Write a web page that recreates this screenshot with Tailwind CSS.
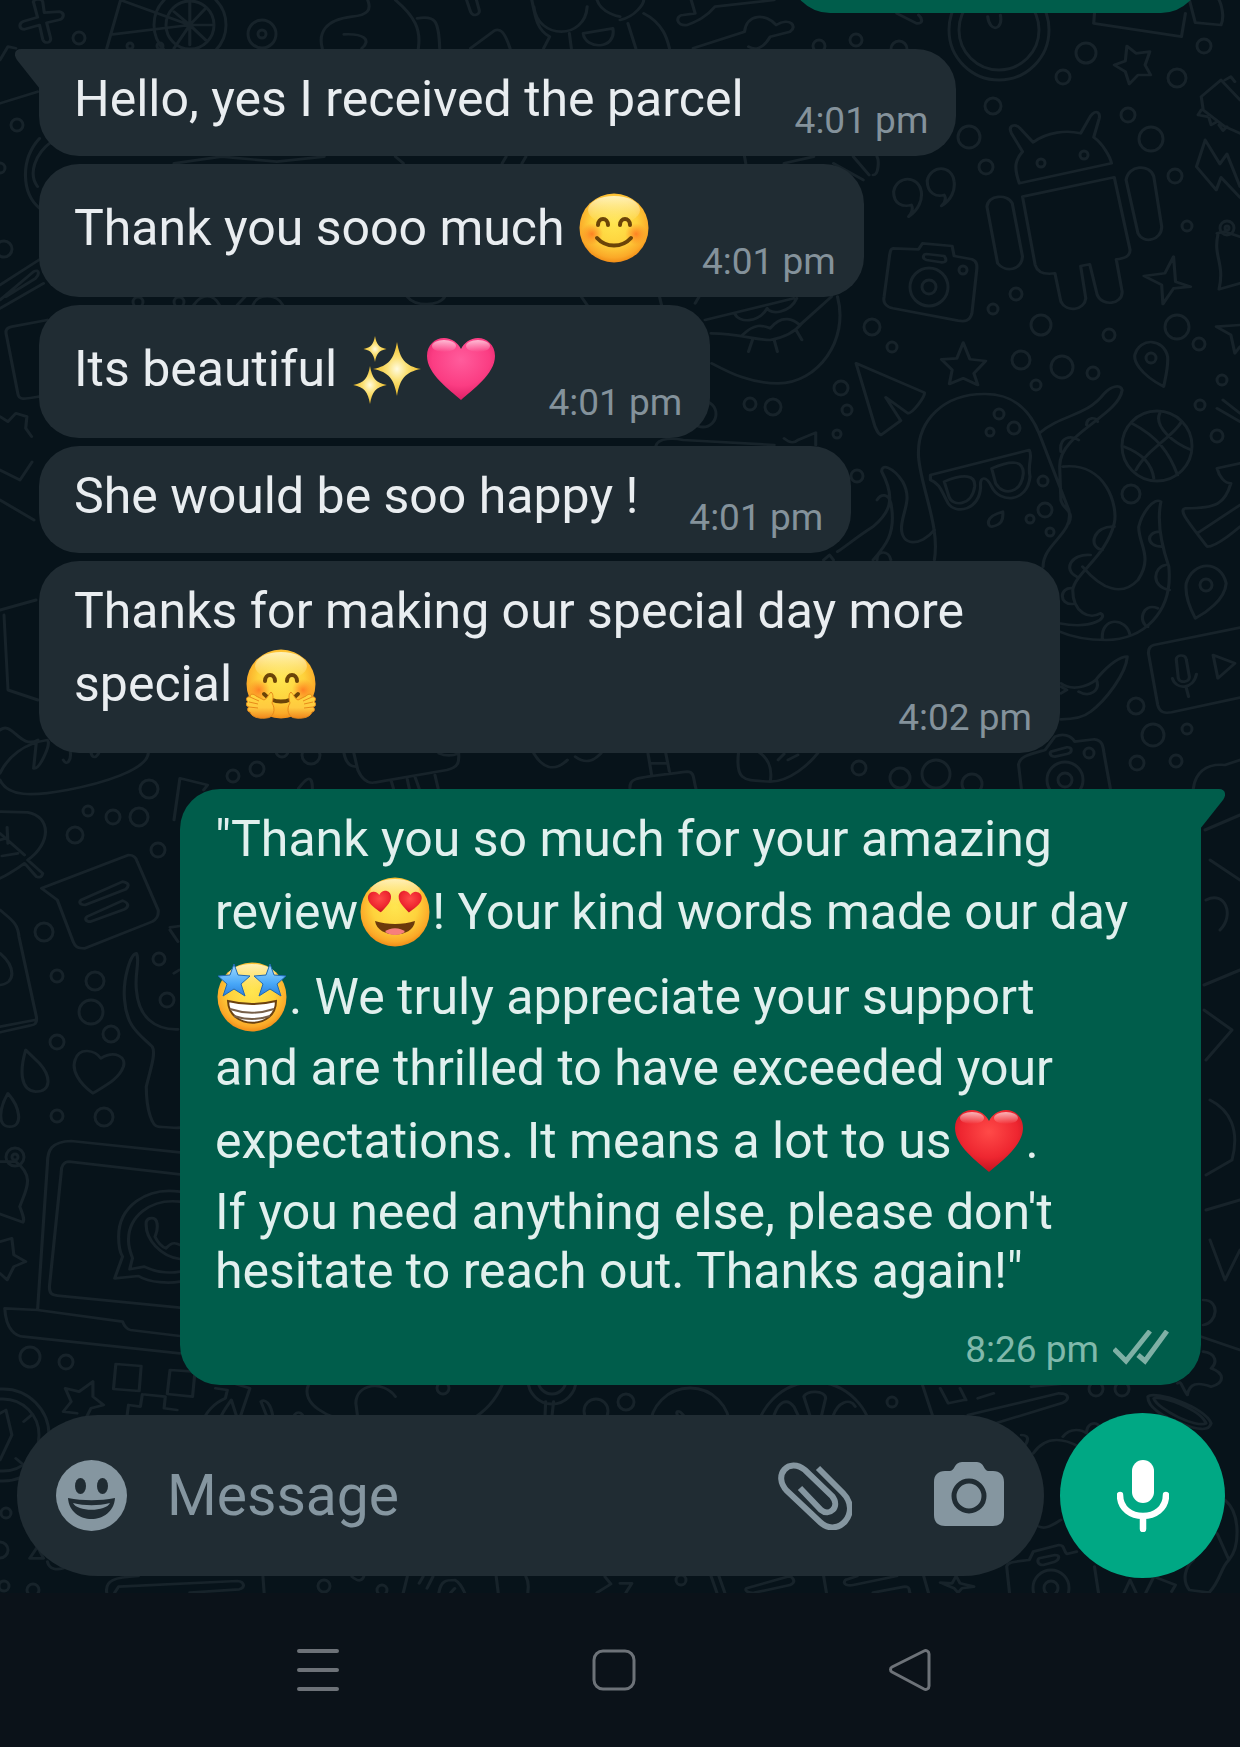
<!DOCTYPE html>
<html lang="en">
<head>
<meta charset="utf-8">
<meta name="viewport" content="width=device-width, initial-scale=1">
<title>Chat</title>
<script src="https://cdn.jsdelivr.net/npm/@tailwindcss/browser@4"></script>
</head>
<body class="min-h-screen bg-[#0b1219] font-['Roboto',sans-serif] text-[#e9edf0]">

<!-- shared emoji gradients and shapes -->
<svg class="absolute size-0" aria-hidden="true">
  <defs>
    <radialGradient id="face" cx=".5" cy=".42" r=".6">
      <stop offset="0" stop-color="#ffe650"/><stop offset=".55" stop-color="#fed23c"/><stop offset=".85" stop-color="#fba928"/><stop offset="1" stop-color="#ee8412"/>
    </radialGradient>
    <linearGradient id="shine" x2="0" y2="1"><stop offset="0" stop-color="#fff6c8" stop-opacity=".9"/><stop offset="1" stop-color="#fff0a0" stop-opacity="0"/></linearGradient>
    <radialGradient id="blush"><stop offset="0" stop-color="#ff6a1c" stop-opacity=".75"/><stop offset="1" stop-color="#ff7a1c" stop-opacity="0"/></radialGradient>
    <radialGradient id="pink" cx=".5" cy=".35" r=".7"><stop offset="0" stop-color="#ff5c9c"/><stop offset=".6" stop-color="#fb3d83"/><stop offset="1" stop-color="#d9185f"/></radialGradient>
    <radialGradient id="red" cx=".5" cy=".35" r=".7"><stop offset="0" stop-color="#ff4a48"/><stop offset=".6" stop-color="#ee2630"/><stop offset="1" stop-color="#b80f1c"/></radialGradient>
    <linearGradient id="gloss" x2="0" y2="1"><stop offset="0" stop-color="#fff" stop-opacity=".65"/><stop offset="1" stop-color="#fff" stop-opacity="0"/></linearGradient>
    <radialGradient id="spark"><stop offset="0" stop-color="#fffbe0"/><stop offset=".4" stop-color="#fbe27a"/><stop offset="1" stop-color="#eebb20"/></radialGradient>
    <linearGradient id="blue" x2="0" y2="1"><stop offset="0" stop-color="#a4dcff"/><stop offset=".6" stop-color="#4aa9f8"/><stop offset="1" stop-color="#2a7fe0"/></linearGradient>
    <linearGradient id="hand" x2="0" y2="1"><stop offset="0" stop-color="#ffd83f"/><stop offset=".6" stop-color="#ffca40"/><stop offset="1" stop-color="#f0861c"/></linearGradient>
    <path id="heart" d="M35 66C24 56 1 40 1 22C1 11 9 4 18 4C26 4 32 9 35 15C38 9 44 4 52 4C61 4 69 11 69 22C69 40 46 56 35 66Z"/>
    <path id="star" d="M16 0L20 11L32 12L23 20L27 32L16 25L5 32L9 20L0 12L12 11Z"/>
    <path id="twinkle" d="M0-27C3-10 8-3 24 0C8 3 3 10 0 27C-3 10-8 3-24 0C-8-3-3-10 0-27Z"/>
    <g id="smile">
      <circle cx="35" cy="35" r="34.500" fill="url(#face)"/>
      <ellipse cx="35" cy="17" rx="26" ry="14" fill="url(#shine)"/>
      <circle cx="13" cy="41" r="11" fill="url(#blush)"/><circle cx="57" cy="41" r="11" fill="url(#blush)"/>
      <g fill="none" stroke="#6b4408" stroke-width="4" stroke-linecap="round">
        <path d="M19 32C19 24 29 24 29 32M41 32C41 24 51 24 51 32"/>
        <path d="M18 45C27 55 43 55 52 45"/>
      </g>
    </g>
  </defs>
</svg>

<div class="relative overflow-hidden bg-[#07131a]">
  <!-- wallpaper doodles -->
  <svg class="absolute inset-0 h-full w-full" viewBox="0 0 1240 1593" preserveAspectRatio="xMidYMin slice" fill="none" stroke="#17232a" stroke-width="3" stroke-linejoin="round" stroke-linecap="round" aria-hidden="true">
    <circle cx="79" cy="38" r="6"/><circle cx="262" cy="34" r="14"/><circle cx="262" cy="34" r="4"/><circle cx="17" cy="125" r="6"/><circle cx="0" cy="168" r="5"/><circle cx="4" cy="249" r="8"/><circle cx="190" cy="25" r="24"/><circle cx="190" cy="25" r="36"/><circle cx="130" cy="46" r="3"/><circle cx="160" cy="46" r="3"/><circle cx="138" cy="302" r="5"/><circle cx="179" cy="302" r="5"/>
    <circle cx="819" cy="46" r="6"/><circle cx="856" cy="40" r="6"/><circle cx="899" cy="49" r="8"/><circle cx="1086" cy="53" r="10"/><circle cx="1204" cy="46" r="7"/><circle cx="1063" cy="77" r="7"/><circle cx="1177" cy="78" r="9"/><circle cx="993" cy="106" r="8"/><circle cx="1128" cy="115" r="7"/><circle cx="969" cy="137" r="11"/><circle cx="1151" cy="139" r="12"/><circle cx="986" cy="167" r="7"/><circle cx="1175" cy="176" r="7"/><circle cx="1187" cy="226" r="5"/><circle cx="1016" cy="294" r="6"/><circle cx="993" cy="309" r="5"/><circle cx="1041" cy="325" r="10"/><circle cx="872" cy="327" r="8"/><circle cx="1109" cy="335" r="6"/><circle cx="1177" cy="327" r="12"/><circle cx="892" cy="347" r="5"/><circle cx="1199" cy="344" r="6"/><circle cx="1021" cy="360" r="9"/><circle cx="1062" cy="367" r="11"/><circle cx="1093" cy="373" r="6"/><circle cx="1036" cy="385" r="5"/><circle cx="841" cy="388" r="7"/><circle cx="750" cy="404" r="6"/><circle cx="773" cy="407" r="8"/><circle cx="847" cy="410" r="5"/><circle cx="1222" cy="380" r="5"/><circle cx="1200" cy="405" r="5"/><circle cx="837" cy="434" r="4"/><circle cx="1217" cy="436" r="6"/><circle cx="703" cy="414" r="13"/>
    <circle cx="999" cy="30" r="50"/><circle cx="999" cy="30" r="40"/><circle cx="1041" cy="163" r="4"/><circle cx="1084" cy="155" r="4"/><circle cx="929" cy="287" r="19"/><circle cx="929" cy="287" r="7"/><circle cx="963" cy="270" r="4"/><circle cx="1151" cy="358" r="5"/><circle cx="1227" cy="228" r="7"/><circle cx="1227" cy="228" r="2"/>
    <circle cx="999" cy="414" r="5"/><circle cx="1014" cy="428" r="6"/><circle cx="990" cy="432" r="4"/><circle cx="1043" cy="481" r="5"/><circle cx="1045" cy="510" r="7"/><circle cx="1030" cy="519" r="4"/><circle cx="1050" cy="532" r="4"/><circle cx="1157" cy="446" r="35"/><circle cx="1131" cy="494" r="9"/><circle cx="857" cy="476" r="6"/><circle cx="1206" cy="585" r="6"/><circle cx="1136" cy="706" r="8"/><circle cx="1153" cy="735" r="11"/><circle cx="1187" cy="729" r="5"/><circle cx="1137" cy="763" r="7"/><circle cx="1176" cy="761" r="6"/><circle cx="859" cy="768" r="7"/><circle cx="900" cy="778" r="10"/><circle cx="936" cy="774" r="14"/><circle cx="972" cy="784" r="10"/><circle cx="1065" cy="780" r="18"/><circle cx="1065" cy="780" r="7"/><circle cx="1089" cy="753" r="5"/>
    <circle cx="282" cy="751" r="6"/><circle cx="311" cy="755" r="9"/><circle cx="233" cy="776" r="6"/><circle cx="257" cy="769" r="7"/><circle cx="149" cy="789" r="9"/><circle cx="88" cy="811" r="5"/><circle cx="113" cy="817" r="7"/><circle cx="139" cy="817" r="9"/><circle cx="75" cy="835" r="8"/><circle cx="158" cy="850" r="7"/><circle cx="44" cy="932" r="9"/><circle cx="159" cy="959" r="6"/><circle cx="57" cy="976" r="6"/><circle cx="95" cy="981" r="9"/><circle cx="91" cy="1012" r="12"/><circle cx="167" cy="1000" r="7"/><circle cx="111" cy="1034" r="8"/><circle cx="57" cy="1042" r="7"/><circle cx="57" cy="1116" r="6"/><circle cx="104" cy="1117" r="9"/><circle cx="15" cy="1157" r="9"/><circle cx="15" cy="1157" r="3"/><circle cx="30" cy="1357" r="10"/><circle cx="66" cy="1362" r="7"/><circle cx="443" cy="1388" r="6"/><circle cx="596" cy="1411" r="12"/><circle cx="6" cy="1513" r="5"/><circle cx="0" cy="1550" r="8"/><circle cx="4" cy="1586" r="5"/><circle cx="33" cy="1590" r="6"/><circle cx="324" cy="1586" r="6"/><circle cx="382" cy="1590" r="5"/><circle cx="626" cy="1402" r="8"/><circle cx="892" cy="1402" r="5"/><circle cx="1096" cy="1389" r="7"/><circle cx="1122" cy="1389" r="7"/><circle cx="681" cy="1580" r="5"/><circle cx="1051" cy="1588" r="18"/><circle cx="1051" cy="1588" r="7"/>
    <circle cx="3" cy="1435" r="46"/><circle cx="3" cy="1435" r="36"/><circle cx="552" cy="1380" r="24"/><circle cx="552" cy="1380" r="14"/><circle cx="690" cy="1428" r="40"/><circle cx="814" cy="1440" r="58"/>
    <g transform="scale(.3954 .3333)" stroke-width="8">
      <path d="M85 8C80 0 105-8 108 5L112 38L150 35C165 38 162 58 148 60L118 68L128 115C130 130 112 132 108 118L100 75L62 88C48 88 46 70 60 64L95 52ZM305 0L270 145M305 0L480 75L285 103M480 75L440 145M480 75L480 0M480 75L540 75M480 75L520 120M480 75L480 135M480 75L520 25M480 75L440 35M930 0C940 30 930 45 890 50C820 60 805 100 815 145M870 103C920 100 940 120 915 145M1000 0C1050 50 1065 90 1058 145M1055 55C1100 45 1110 60 1112 145M1180 0L1190 35C1195 52 1215 45 1212 30L1205 0M1190 145L1250 92C1265 85 1275 92 1290 145M1350 20C1360 120 1480 120 1485 20M1345 0C1355 60 1360 90 1390 110L1375 145M1440 100L1445 145M1475 100L1550 85C1560 150 1480 150 1475 100M1510 0C1520 40 1568 50 1568 50M0 180L20 140L40 145M0 310L95 275M100 415C50 480 55 580 100 625M130 425C90 460 70 520 95 560M0 855L105 775M0 900L85 815C100 805 100 825 90 835L15 890M0 925L110 850M120 960L30 980C10 985 15 1000 17 1010L45 1180C48 1205 70 1195 98 1190M0 1250L20 1265L40 1240L68 1250L65 1285L80 1310M440 490L560 470L700 485L820 470M1000 470L1020 490M1270 490L1280 470M1320 490L1330 470M490 915C510 880 540 880 555 915M600 915L620 890M640 915C650 880 700 880 715 915M1030 890C1050 920 1110 920 1125 890M1470 890L1485 915"/>
    </g>
    <g transform="translate(620 0) scale(.3954 .3333)" stroke-width="8">
      <path d="M0 60C40 50 60 10 60 0M60 40C110 70 120 120 125 145M20 70L40 145M240 20L390 0M240 20C215 55 190 65 170 75C140 80 140 45 160 45L190 40L180 0M185 145L315 95C320 40 370 40 395 75C430 50 450 80 430 95L380 110C360 150 340 150 325 140M700 40L750 70C768 72 765 55 755 45M930 50C935 100 970 90 962 45M1200 40L1198 70L1420 110L1430 40M1440 0L1455 68L1520 75C1530 50 1520 10 1515 0"/>
      <path d="M1282 138L1305 160L1340 155L1328 195L1342 225L1310 225L1288 252L1278 215L1250 195L1278 183ZM1470 290L1520 240L1568 300M1470 290L1475 330L1530 380L1568 400M1530 240L1545 230L1555 245M1470 330L1462 345L1485 350M1490 355L1495 375L1510 365M1515 375L1525 392L1535 380M1480 420L1458 500L1508 570L1520 532L1568 592M1480 420L1517 492L1535 462L1568 560"/>
      <path d="M1010 550C995 500 1000 480 1018 455L990 400C980 375 1000 370 1012 385L1045 427C1080 395 1130 390 1165 400L1190 348C1205 325 1215 340 1212 355L1198 412C1220 430 1240 470 1243 490ZM1018 590L1250 532L1290 750C1290 770 1275 775 1255 778L1270 875C1270 915 1220 920 1207 885L1188 793L1165 798L1178 895C1175 930 1130 940 1115 905L1100 820C1070 825 1055 815 1050 795ZM928 620C930 585 980 580 992 610L1018 770C1015 810 975 820 955 790ZM1280 540C1285 495 1340 490 1350 530L1370 680C1370 720 1325 735 1310 700Z"/>
      <path d="M730 650C755 630 765 600 762 575C755 525 700 525 692 575C692 612 715 622 737 615C742 625 738 640 730 650ZM813 618C838 600 848 570 845 545C840 492 785 495 777 542C777 580 800 592 820 585C825 595 822 608 813 618ZM690 745L755 748L765 730L840 738L845 768L890 778C905 785 903 800 902 812L890 940C885 965 870 965 855 962L690 925C670 920 665 905 668 890L682 765C684 750 685 748 690 745ZM775 762L820 768C830 785 820 788 812 787L775 780C762 775 768 762 775 762ZM1400 770L1405 845L1443 860L1400 865L1373 912L1370 855L1325 828L1378 820ZM1568 975L1508 980L1545 1005L1555 1060L1568 1040M1510 700L1530 695L1568 710M1512 705C1500 770 1530 790 1515 868L1568 850M868 1028L885 1078L925 1083L895 1120L905 1155L868 1135L833 1152L840 1110L813 1078L852 1075ZM597 1090L770 1178C772 1190 740 1240 728 1240L672 1192L710 1262L660 1305C650 1300 650 1290 645 1280ZM1375 1160C1310 1120 1300 1080 1302 1065C1315 1010 1375 1015 1385 1070C1387 1100 1380 1130 1375 1160ZM200 890L190 910M100 890L105 915M215 960L440 895M290 940C300 970 350 970 372 925C380 945 430 940 447 895M310 1005C340 970 360 975 380 985C410 940 440 960 455 975L535 890M230 1000C300 1000 340 1020 380 1020C430 1010 450 985 460 970M335 1020L325 1055M390 1020L398 1055M445 990L460 1020M550 890C580 1020 500 1150 400 1150C330 1150 280 1120 232 1090M415 490L490 470M540 490L615 540M590 470L630 525M640 525C655 525 655 480 650 470M315 470L318 490"/>
    </g>
    <g transform="translate(620 400) scale(.3954 .3333)" stroke-width="8">
      <path d="M755 170C750 60 820-20 925-18C1000-18 1040 40 1060 100L1135 330C1150 400 1070 430 1070 500M755 170C760 260 810 380 795 480M1060 100C1120 40 1180 50 1225-20C1240-40 1265-50 1270-30C1260 50 1110 100 1112 200L1115 300C1120 330 1150 330 1135 370M1120 200C1230 185 1260 320 1250 370C1230 470 1150 520 1145 570C1145 640 1190 660 1215 640C1235 650 1200 690 1110 670M1170 500C1220 570 1270 590 1310 540C1350 470 1310 430 1312 380C1320 340 1350 290 1368 305C1360 350 1365 420 1388 500C1400 640 1320 720 1230 720C1180 720 1140 710 1112 695M1250 380C1200 375 1180 440 1220 450M1190 465C1140 460 1120 510 1155 530M1145 565C1110 560 1110 615 1145 612M1365 395C1330 395 1330 440 1370 440M1380 495C1350 500 1340 560 1390 570M1360 625C1320 605 1310 670 1335 680M1220 718C1215 650 1280 650 1290 705M1115 155C1110 110 1140 105 1160 120M1180 75C1180 50 1205 50 1208 65"/>
      <path d="M785 225L1035 150C1045 170 1030 190 1037 230C1030 310 960 310 940 260C925 225 910 230 912 260C910 330 850 345 830 310C815 280 810 250 785 240ZM820 245C870 220 900 225 897 260C890 320 840 320 832 290ZM940 205C990 180 1020 180 1020 220C1015 280 970 290 950 250ZM968 335C920 350 930 380 940 380C965 375 970 360 968 335ZM1295 70C1360 110 1390 160 1410 225M1275 140C1320 160 1345 190 1350 235M1305 210C1330 150 1400 110 1420 65M1365 40C1350 80 1400 130 1445 150M795 390C760 440 710 440 712 380C715 330 740 300 715 245C690 200 660 190 662 215C700 300 680 340 640 380C600 410 570 440 550 455M650 300C660 280 680 280 685 310C700 400 670 440 640 480M515 480L530 465L540 480M650 480C650 450 680 450 685 480M415 115C430 130 440 130 450 120L495 98L495 135M90 140C95 110 140 115 160 120L390 135M1568 190L1510 205C1515 230 1530 250 1545 250M1545 250C1530 310 1510 325 1430 325C1410 330 1440 370 1485 440C1510 440 1568 380 1568 380M1460 400L1568 315M1510 25L1568 65M1525 0L1568 40M1455 655C1430 600 1430 570 1432 550C1450 480 1520 480 1533 550C1530 600 1480 640 1455 655ZM1568 683L1350 735C1335 740 1335 755 1338 770L1360 915C1365 940 1380 940 1395 937L1568 893M1407 780C1405 765 1430 760 1432 778L1440 830C1440 848 1415 850 1412 835ZM1397 835C1405 870 1450 870 1458 822M1432 863L1438 890M1500 765L1555 790L1512 835ZM1115 850C1150 880 1200 850 1210 830C1240 790 1265 770 1283 770C1280 820 1230 900 1190 935C1170 955 1140 958 1115 958M1115 860L1130 870L1115 880M1160 875C1190 895 1215 870 1205 840M1015 1165L1008 1095C1010 1070 1030 1065 1075 1050L1100 1010C1120 1000 1140 1005 1150 1025L1200 1018C1220 1020 1222 1040 1224 1060L1240 1165M1090 1055L1130 1042C1145 1040 1145 1058 1130 1062L1100 1070C1088 1070 1086 1060 1090 1055ZM1450 1165C1455 1120 1480 1090 1530 1095L1568 1080M70 1055L80 1125M115 1055L125 1115M80 1090L115 1090M25 1165C25 1130 40 1135 170 1115C190 1115 185 1140 192 1165M300 1055C290 1150 320 1140 380 1145C430 1145 480 1090 500 1060M350 1055C380 1080 385 1110 380 1145M400 1080L415 1062M425 1080L450 1065"/>
    </g>
    <g transform="translate(0 740) scale(.3954 .3333)" stroke-width="8">
      <path d="M0 100C20 50 60 10 120 0M0 120C20 170 80 170 170 150C260 130 370 90 375 40M85 85C100 90 125 20 122 5M85 85L92 5M160 60C170 80 180 60 178 38M230 38C235 60 245 50 250 38M870 40C875 70 885 80 900 80M895 40L905 90C920 130 940 130 950 127L1130 90C1165 80 1160 60 1160 40M990 125L995 145M1030 118L1035 145M1050 112L1060 145M1100 105L1108 145M1350 40C1370 80 1400 100 1435 60M1455 50C1490 80 1510 50 1520 40M1110 40C1130 50 1150 45 1160 40M755 145C765 130 790 90 790 145M440 240L455 115L525 135L515 150M0 215L70 217C130 230 130 310 70 360L108 400C105 415 98 412 92 410L62 370C40 390 10 410 0 415M0 280L62 345M18 262L20 310M5 348L45 340M15 295L0 300M105 445L325 345C340 345 345 355 347 365L400 510C402 530 395 538 385 545L215 625C195 625 190 620 185 605L145 480ZM205 480L310 425C330 430 325 440 318 448L215 495C200 495 200 485 205 480ZM220 530L310 482C328 490 325 500 315 508L228 545C215 545 215 535 220 530ZM0 510C30 540 45 550 48 590L92 830C95 855 85 855 75 857L0 877M0 860L88 840M0 640C40 680 40 730 0 735M345 640C330 640 310 720 315 780C320 860 350 880 385 920C395 940 380 990 370 1040C370 1110 385 1160 400 1160C420 1162 440 1165 455 1163M345 640C355 660 340 700 345 750C350 830 390 870 450 868M430 562L455 558M430 570L450 605M440 700L453 690"/>
    </g>
    <g transform="translate(0 1060) scale(.3954 .3333)" stroke-width="8">
      <path d="M65-30C50 30 50 90 90 95C130 95 130 50 100 10ZM235 100C200 70 180 30 190 0C200-40 240-30 255-5C290-30 320-10 312 20C300 60 260 80 235 100ZM20 100C0 140-10 200 25 200C60 200 50 140 20 100ZM0 305L40 305C90 350 65 390 50 440C60 470 62 480 58 487L0 462M455 277L180 243C130 245 120 270 120 310L95 750L12 745C15 810 40 830 60 830L455 880M455 343L175 305C160 305 155 320 155 335L125 680C125 700 130 705 145 707L455 743M95 750L310 785C315 800 320 808 330 810L455 828M455 395C370 380 300 440 300 530C300 560 305 580 310 590L290 655L350 648C380 670 430 670 455 665M455 425C380 415 325 470 325 540C325 570 335 590 335 595L328 628L365 620C400 640 430 640 455 635M370 485C375 470 395 470 397 490C400 510 395 520 392 530C400 550 410 560 420 565C430 550 440 545 455 555M370 485C365 540 410 590 455 597M0 545L30 535L35 585L65 605L35 620L18 660L0 640M293 912L357 918L352 993L287 987ZM430 930L493 935L487 1010L423 1002ZM360 1003L418 1010L415 1045L448 1050M360 1003L355 1040L325 1035L320 1080M235 965L235 1010L262 1035L230 1045L215 1080M235 965L200 995L165 985L180 1025L160 1055L195 1060M545 985L575 990L570 1015C540 1030 520 1060 515 1080M590 970L632 985L605 1080M555 1080C565 1050 580 1030 585 1020L600 1075M660 1025C670 1015 685 1030 690 1070M660 1025L675 1070M740 1080C745 1050 765 1050 770 1080M780 975C760 1030 830 1080 890 1080M1000 1010C970 960 900 970 900 1030L905 1075M1270 975C1250 1030 1220 1060 1190 1080M1380 1025L1378 1080M1400 1025L1395 1080M1065 1080L1070 1070"/>
    </g>
    <g transform="translate(0 1380) scale(.3954 .3333)" stroke-width="8">
      <path d="M0 100L15 90L30 165L0 240M60 125L80 105M40 235L55 250M75 535L95 500L110 535ZM120 545C125 570 145 570 160 565M270 638C265 600 290 592 350 588M290 638L300 620L600 603C620 605 620 625 605 628L480 638M665 590L668 638M890 590C905 605 915 605 920 590M1020 638L1030 590M1060 610L1070 590M1080 625L1095 590M1110 638C1115 600 1130 600 1150 600C1165 610 1170 625 1175 638M1140 638L1150 625M1255 590L1260 638M1330 590C1340 610 1335 625 1335 638M1530 590L1545 612L1510 638"/>
    </g>
    <g transform="translate(620 1300) scale(.3954 .3333)" stroke-width="8">
      <path d="M145 345C140 330 150 330 160 345M390 345C400 310 420 290 440 320L450 345M465 290C470 270 520 270 520 295L510 345M465 290L480 345M540 345C550 310 580 290 595 320M765 255L790 345M810 265L830 310L870 300M860 265L875 300M905 295L945 280M880 345L1110 280C1140 280 1135 300 1120 308L950 370M1040 260L1125 250M1335 290C1350 270 1480 320 1495 370C1490 395 1460 390 1420 370C1370 350 1335 320 1335 290ZM1350 295C1370 285 1470 330 1482 370C1460 385 1360 330 1350 295ZM1470 110L1568 150M1475 0C1520 0 1510 70 1475 75M1475 155C1510 160 1510 190 1495 205C1530 220 1530 250 1495 260C1460 245 1440 250 1435 285C1420 260 1420 240 1410 250M1015 405C1040 405 1030 430 1020 440M1045 460C1080 400 1130 420 1160 440M1120 410C1140 380 1170 390 1180 400C1180 370 1200 365 1210 375M1060 680C1080 690 1100 670 1115 660M985 878L978 800C980 785 1000 785 1035 780L1045 755L1110 735C1125 735 1120 750 1130 762L1155 755M1060 775L1100 765C1115 765 1110 780 1100 785L1070 795C1055 795 1055 780 1060 775ZM1200 800L1210 878M1530 600C1570 640 1568 740 1540 780L1510 700M1540 780C1520 800 1520 840 1490 878L1440 870C1420 840 1430 800 1450 780M1275 878L1290 840L1305 878M1330 878L1350 830L1405 855L1395 875M0 850L30 850L15 878M230 828L245 878M250 828L265 878M320 865L430 828C445 840 440 850 430 855L340 878C320 880 315 870 320 865ZM515 828L522 878M570 840L600 828M570 840C560 855 580 858 590 855L700 828M640 878L720 860C735 860 730 870 733 878M768 828L780 878M810 848L840 850L850 828L860 850L895 860L865 865L855 878L845 865Z"/>
    </g>
    <path d="M1205 830L1240 815M1210 860L1240 880M1206 900C1225 890 1235 915 1220 930M1204 985L1240 970M1204 1010L1232 1030L1206 1060M1210 1100C1230 1110 1240 1130 1232 1160L1206 1175M1206 1210L1240 1200M1210 1240L1225 1280L1240 1250M0 470L20 480L32 462M0 500L34 520M0 610L36 600M4 615L8 690L38 700M0 730C12 720 20 750 38 740"/>
  </svg>

  <main class="relative flex flex-col items-start px-[39px]">
    <!-- tail end of the previous outgoing message -->
    <div class="flex h-[13px] items-end self-end overflow-hidden">
      <div class="h-20 w-[411px] shrink-0 rounded-[40px] bg-[#005d4b]"></div>
    </div>

    <section class="mt-9 flex w-full flex-col items-start gap-2" aria-label="Received messages">
      <article class="relative flex items-end gap-[51px] rounded-[40px] rounded-tl-none bg-[#202c33] pr-7 pl-[35px]">
        <svg class="absolute top-0 -left-6 h-10 w-[25px]" viewBox="0 0 25 40" fill="#202c33" aria-hidden="true"><path d="M25 0H6C0 0-2 5 2 11L25 40Z"/></svg>
        <p class="pt-[21px] pb-[27px] text-[50px] leading-[59px]">Hello, yes I received the parcel</p>
        <time class="pb-[13px] text-[37px] leading-[44px] whitespace-nowrap text-[#84929b]">4:01 pm</time>
      </article>

      <article class="flex items-end gap-[51px] rounded-[40px] bg-[#202c33] pr-7 pl-[35px]">
        <p class="pt-[21px] pb-[27px] text-[50px] leading-[59px]">Thank you sooo much <span class="inline-flex h-[85px] w-[74px] items-center justify-center align-[-18px]"><svg class="size-[70px]" viewBox="0 0 70 70" role="img" aria-label="smiling face"><use href="#smile"/></svg></span></p>
        <time class="pb-[13px] text-[37px] leading-[44px] whitespace-nowrap text-[#84929b]">4:01 pm</time>
      </article>

      <article class="flex items-end gap-[51px] rounded-[40px] bg-[#202c33] pr-7 pl-[35px]">
        <p class="pt-[21px] pb-[27px] text-[50px] leading-[59px]">Its beautiful <span class="inline-flex h-[85px] w-[74px] items-center justify-center align-[-18px]"><svg class="size-[70px]" viewBox="0 0 70 70" role="img" aria-label="sparkles"><g fill="url(#spark)"><use href="#twinkle" transform="translate(45 35)"/><use href="#twinkle" transform="translate(23 15) scale(.48)"/><use href="#twinkle" transform="translate(18 51) scale(.7)"/></g></svg></span><span class="inline-flex h-[85px] w-[74px] items-center justify-center align-[-18px]"><svg class="size-[70px]" viewBox="0 0 70 70" role="img" aria-label="pink heart"><use href="#heart" fill="url(#pink)"/><ellipse cx="18" cy="12" rx="12" ry="6" fill="url(#gloss)"/><ellipse cx="52" cy="12" rx="12" ry="6" fill="url(#gloss)"/></svg></span></p>
        <time class="pb-[13px] text-[37px] leading-[44px] whitespace-nowrap text-[#84929b]">4:01 pm</time>
      </article>

      <article class="flex items-end gap-[51px] rounded-[40px] bg-[#202c33] pr-7 pl-[35px]">
        <p class="pt-[21px] pb-[27px] text-[50px] leading-[59px]">She would be soo happy !</p>
        <time class="pb-[13px] text-[37px] leading-[44px] whitespace-nowrap text-[#84929b]">4:01 pm</time>
      </article>

      <article class="grid max-w-[1021px] rounded-[40px] bg-[#202c33] pr-7 pl-[35px]">
        <p class="col-start-1 row-start-1 pt-[21px] pb-[27px] text-[50px] leading-[59px]">Thanks for making our special day more special <span class="inline-flex h-[85px] w-[74px] items-center justify-center align-[-18px]"><svg class="size-[70px]" viewBox="0 0 70 70" role="img" aria-label="hugging face"><use href="#smile"/><g fill="url(#hand)" stroke="#e88a1a" stroke-width="1"><path d="M25 43C28 45 27 51 26 54C30 60 28 69 20 69C11 70 5 67 4 63C1 63 1 59 3 58C-1 57 0 53 2 53C-1 50 1 47 4 48C4 44 8 45 10 47L18 51C21 50 22 46 25 43ZM3 53L12 55M3 58L12 59M4 48L13 52"/><path d="M45 43C42 45 43 51 44 54C40 60 42 69 50 69C59 70 65 67 66 63C69 63 69 59 67 58C71 57 70 53 68 53C71 50 69 47 66 48C66 44 62 45 60 47L52 51C49 50 48 46 45 43ZM67 53L58 55M67 58L58 59M66 48L57 52"/></g></svg></span></p>
        <time class="col-start-1 row-start-1 self-end justify-self-end pb-[13px] text-[37px] leading-[44px] whitespace-nowrap text-[#84929b]">4:02 pm</time>
      </article>
    </section>

    <article class="relative mt-9 flex w-full max-w-[1021px] flex-col self-end rounded-[40px] rounded-tr-none bg-[#005d4b] pr-7 pl-[35px]">
      <svg class="absolute top-0 -right-6 h-10 w-[25px]" viewBox="0 0 25 40" fill="#005d4b" aria-hidden="true"><path d="M0 0H19C25 0 27 5 23 11L0 40Z"/></svg>
      <p class="pt-[21px] pb-[27px] text-[50px] leading-[59px] text-[#e1f0ee]">"Thank you so much for your amazing<br>review<span class="inline-flex h-[85px] w-[74px] items-center justify-center align-[-18px]"><svg class="size-[70px]" viewBox="0 0 70 70" role="img" aria-label="heart eyes"><circle cx="35" cy="35" r="34.500" fill="url(#face)"/><ellipse cx="35" cy="15" rx="25" ry="13" fill="url(#shine)"/><g fill="url(#red)"><use href="#heart" transform="translate(7 14) rotate(-5) scale(.34)"/><use href="#heart" transform="translate(39 12) rotate(5) scale(.34)"/></g><path d="M15 44C27 48 43 48 55 44C53 62 18 62 15 44Z" fill="#6b3a0c"/><path d="M25 55C29 50 41 50 45 55C39 59 31 59 25 55Z" fill="#f77f7c"/></svg></span>! Your kind words made our day<br><span class="inline-flex h-[85px] w-[74px] items-center justify-center align-[-18px]"><svg class="size-[70px]" viewBox="0 0 70 70" role="img" aria-label="star struck"><circle cx="35" cy="35" r="34.500" fill="url(#face)"/><ellipse cx="35" cy="15" rx="25" ry="13" fill="url(#shine)"/><g fill="url(#blue)" stroke="#1f69b4" stroke-width="1"><use href="#star" transform="translate(1 2)"/><use href="#star" transform="translate(37 2)"/></g><path d="M11 39C27 43 43 43 59 39C59 68 12 68 11 39Z" fill="#fff" stroke="#6b4110" stroke-width="2"/><path d="M13 47C28 52 42 52 57 47M17 54C28 58 42 58 53 54" fill="none" stroke="#77604a" stroke-width="2"/></svg></span>. We truly appreciate your support<br>and are thrilled to have exceeded your<br>expectations. It means a lot to us<span class="inline-flex h-[85px] w-[74px] items-center justify-center align-[-18px]"><svg class="size-[70px]" viewBox="0 0 70 70" role="img" aria-label="red heart"><use href="#heart" fill="url(#red)"/><ellipse cx="18" cy="12" rx="12" ry="6" fill="url(#gloss)"/><ellipse cx="52" cy="12" rx="12" ry="6" fill="url(#gloss)"/></svg></span>.<br>If you need anything else, please don't<br>hesitate to reach out. Thanks again!"</p>
      <div class="flex items-center gap-3.5 self-end pb-[13px]">
        <time class="text-[37px] leading-[44px] text-[#80b9ab]">8:26 pm</time>
        <svg class="mr-1 mb-1 h-9 w-14" viewBox="0 0 56 36" fill="none" stroke="#7fb0a5" stroke-width="5" role="img" aria-label="Delivered"><path d="M1 19L13 31L37 1M25 25L32 31L54 1"/></svg>
      </div>
    </article>
  </main>

  <form class="relative flex items-center gap-4 pt-7 pr-[15px] pb-[15px] pl-[17px]">
    <div class="flex h-[161px] min-w-0 flex-1 items-center rounded-full bg-[#202c33] pr-10 pl-[39px]">
      <button type="button" aria-label="Emoji" class="shrink-0">
        <svg class="size-[71px]" viewBox="0 0 71 71" aria-hidden="true"><circle cx="35.500" cy="35.500" r="35.500" fill="#8596a0"/><g fill="#202c33"><ellipse cx="24.500" cy="26" rx="5.500" ry="8"/><ellipse cx="46.500" cy="26" rx="5.500" ry="8"/><path d="M12 38C27 41 44 41 59 38C57 66 14 66 12 38Z"/></g><path d="M17 43C29 46 42 46 54 43C50 52 21 52 17 43Z" fill="#8596a0"/></svg>
      </button>
      <input type="text" aria-label="Message" placeholder="Message" class="ml-10 h-20 w-0 min-w-0 flex-1 bg-transparent text-[57px] text-[#e9edf0] outline-none placeholder:text-[#8596a0]">
      <button type="button" aria-label="Attach" class="shrink-0">
        <svg class="h-[68px] w-[74px]" viewBox="0 0 74 68" fill="none" stroke="#8596a0" stroke-width="6" aria-hidden="true"><path d="M40 6L65 31C84 50 60 77 42 60L9 29C-6 13 11-5 27 8L54 34C63 45 51 55 43 48L22 26"/></svg>
      </button>
      <button type="button" aria-label="Camera" class="mb-1 ml-[82px] shrink-0">
        <svg class="h-[66px] w-[70px]" viewBox="0 0 70 66" aria-hidden="true"><path d="M28 1H43C50 1 50 10 54 10H59C66 10 70 14 70 21V54C70 61 66 65 59 65H11C4 65 0 61 0 54V21C0 14 4 10 11 10H16C21 10 20 1 28 1Z" fill="#8596a0"/><circle cx="35" cy="35" r="15" fill="#8596a0" stroke="#202c33" stroke-width="5"/></svg>
      </button>
    </div>
    <button type="button" aria-label="Record voice message" class="flex size-[165px] shrink-0 items-center justify-center rounded-full bg-[#00a884]">
      <svg class="h-[72px] w-[52px]" viewBox="0 0 52 72" fill="none" stroke="#fff" aria-hidden="true"><rect x="15" y="0" width="22" height="43" rx="11" fill="#fff" stroke="none"/><path d="M3 35C3 63 49 63 49 35M26 56V69" stroke-width="6.500" stroke-linecap="round"/></svg>
    </button>
  </form>
</div>

<nav class="flex h-[154px] items-center justify-center gap-[252px] pr-3" aria-label="System navigation">
  <button type="button" aria-label="Recent apps"><svg class="h-[42px] w-[44px]" viewBox="0 0 44 42" stroke="#6d7278" stroke-width="4" stroke-linecap="round" aria-hidden="true"><path d="M3 2H41M3 21H41M3 40H41"/></svg></button>
  <button type="button" aria-label="Home"><svg class="h-[42px] w-[44px]" viewBox="0 0 44 42" fill="none" stroke="#6d7278" stroke-width="3" aria-hidden="true"><rect x="2" y="2" width="40" height="38" rx="9"/></svg></button>
  <button type="button" aria-label="Back"><svg class="h-[42px] w-[44px]" viewBox="0 0 44 42" fill="none" stroke="#6d7278" stroke-width="3" stroke-linejoin="round" aria-hidden="true"><path d="M41 5V37C41 40 38 41 36 40L4 23C2 22 2 19 4 18L36 2C38 1 41 2 41 5Z"/></svg></button>
</nav>
</body>
</html>
